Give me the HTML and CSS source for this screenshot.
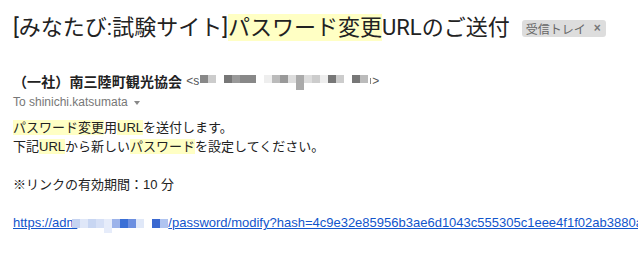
FILE: index.html
```html
<!DOCTYPE html>
<html lang="ja">
<head>
<meta charset="utf-8">
<title>mail</title>
<link rel="stylesheet" href="styles.css">
</head>
<body>
<div class="page">
  <div class="subject">
    <h1 class="title">[みなたび:試験サイト]<span class="hl">パスワード変更</span>URLのご送付</h1>
    <span class="badge">受信トレイ<span class="badge-x">×</span></span>
  </div>
  <div class="from">
    <span class="sender">（一社）南三陸町観光協会</span>
    <span class="addr">&lt;s</span>
    <span class="mask">
      <i class="c g88"></i><i class="c gcc"></i><i class="c"></i><i class="c g77"></i><i class="c g99"></i><i class="c g88"></i><i class="c g88"></i><i class="c"></i><i class="c gee"></i><i class="c gbb"></i><i class="c g99"></i><i class="c gdd"></i><i class="c gaa tall"></i><i class="c gdd"></i><i class="c gcc"></i><i class="c gee"></i><i class="c g77"></i><i class="c gcc"></i><i class="c"></i><i class="c g77"></i><i class="c gbb"></i><i class="bar"></i>
    </span>
    <span class="addr">&gt;</span>
  </div>
  <div class="to">To shinichi.katsumata <span class="caret"></span></div>
  <div class="body">
    <p class="line"><span class="hl">パスワード変更</span>用<span class="hl">URL</span>を送付します。</p>
    <p class="line">下記<span class="hl">URL</span>から新しい<span class="hl">パスワード</span>を設定してください。</p>
    <p class="line blank"></p>
    <p class="line">※リンクの有効期間：10 分</p>
    <p class="line blank"></p>
    <p class="line"><a class="link" href="#">https://adm<span class="lmask"><i class="b first b1"></i><i class="b b2"></i><i class="b b3"></i><i class="b b4"></i><i class="b b5 tall"></i><i class="b b6"></i><i class="b b7"></i><i class="b b8"></i><i class="b b9"></i><i class="b"></i><i class="b b10"></i><i class="b b11"></i></span>/password/modify?hash=4c9e32e85956b3ae6d1043c555305c1eee4f1f02ab3880a8e1</a></p>
  </div>
</div>
</body>
</html>
```
FILE: styles.css
```css
html, body {
  margin: 0;
  padding: 0;
  background: #fff;
}
body {
  font-family: "Liberation Sans", Arial, "Noto Sans CJK JP", sans-serif;
  color: #222;
  overflow: hidden;
  width: 638px;
  height: 255px;
}
.page {
  padding: 14px 0 0 13px;
  white-space: nowrap;
}
.subject {
  display: flex;
  align-items: center;
  height: 28px;
}
.title {
  margin: 0;
  font-family: Roboto, "Noto Sans CJK JP", sans-serif;
  font-weight: 400;
  font-size: 22px;
  line-height: 28px;
  color: #222;
}
.hl {
  background: #ffffc4;
}
.title .hl {
  display: inline-block;
  line-height: 27px;
}
.badge {
  margin-left: 12px;
  display: inline-flex;
  align-items: center;
  height: 17px;
  padding: 0 5px 0 4px;
  background: #dddddd;
  border-radius: 3px;
  color: #666;
  font-family: "Noto Sans CJK JP", sans-serif;
  font-size: 12px;
  gap: 8px;
}
.badge-x {
  font-family: "Liberation Sans", sans-serif;
  font-weight: 700;
  font-size: 12px;
  color: #777;
}
.from {
  margin-top: 29px;
  height: 20px;
  display: flex;
  align-items: center;
}
.sender {
  font-family: "Noto Sans CJK JP", sans-serif;
  font-weight: 700;
  font-size: 14px;
  color: #222;
  letter-spacing: 0.1px;
}
.addr {
  font-size: 12px;
  color: #555;
  margin-left: 4px;
}
.addr + .mask {
  margin-left: 1px;
}
.mask + .addr {
  margin-left: 1px;
}
.mask {
  display: flex;
  align-items: flex-start;
  height: 20px;
  padding-top: 4px;
  box-sizing: border-box;
}
.c {
  display: block;
  width: 8px;
  height: 8px;
}
.c.tall { height: 15px; }
.g77 { background: #777; }
.g88 { background: #888; }
.g99 { background: #999; }
.gaa { background: #aaa; }
.gbb { background: #bbb; }
.gcc { background: #ccc; }
.gdd { background: #ddd; }
.gee { background: #eee; }
.bar {
  display: block;
  width: 1px;
  height: 6px;
  margin: 3px 0 0 2px;
  background: #888;
}
.to {
  margin-top: 3px;
  height: 16px;
  line-height: 16px;
  font-family: "Liberation Sans", Arial, sans-serif;
  font-size: 12px;
  color: #777;
  display: flex;
  align-items: center;
}
.caret {
  display: inline-block;
  margin-left: 6px;
  margin-top: 1px;
  width: 0;
  height: 0;
  border-left: 3.5px solid transparent;
  border-right: 3.5px solid transparent;
  border-top: 4px solid #888;
}
.body {
  margin-top: 8px;
  font-size: 13px;
  line-height: 19px;
}
.line {
  margin: 0;
  height: 19px;
}
.link {
  color: #1155cc;
  text-decoration: underline;
}
.lmask {
  display: inline-flex;
  align-items: flex-start;
  vertical-align: -1px;
  height: 13px;
  margin-left: -5px;
}
.b {
  display: block;
  width: 8px;
  height: 9px;
}
.b.tall { height: 14px; }
.b1 { background: #c5d3f1; }
.b2 { background: #dfe7f8; }
.b3 { background: #c8d6f2; }
.b4 { background: #d6e0f6; }
.b5 { background: #e6ecfa; }
.b6 { background: #9cb3ea; }
.b7 { background: #3a6fd6; }
.b8 { background: #6c8fe0; }
.b9 { background: #e0e8f8; }
.b10 { background: #3a68d0; }
.b11 { background: #b0c4f0; }
```
